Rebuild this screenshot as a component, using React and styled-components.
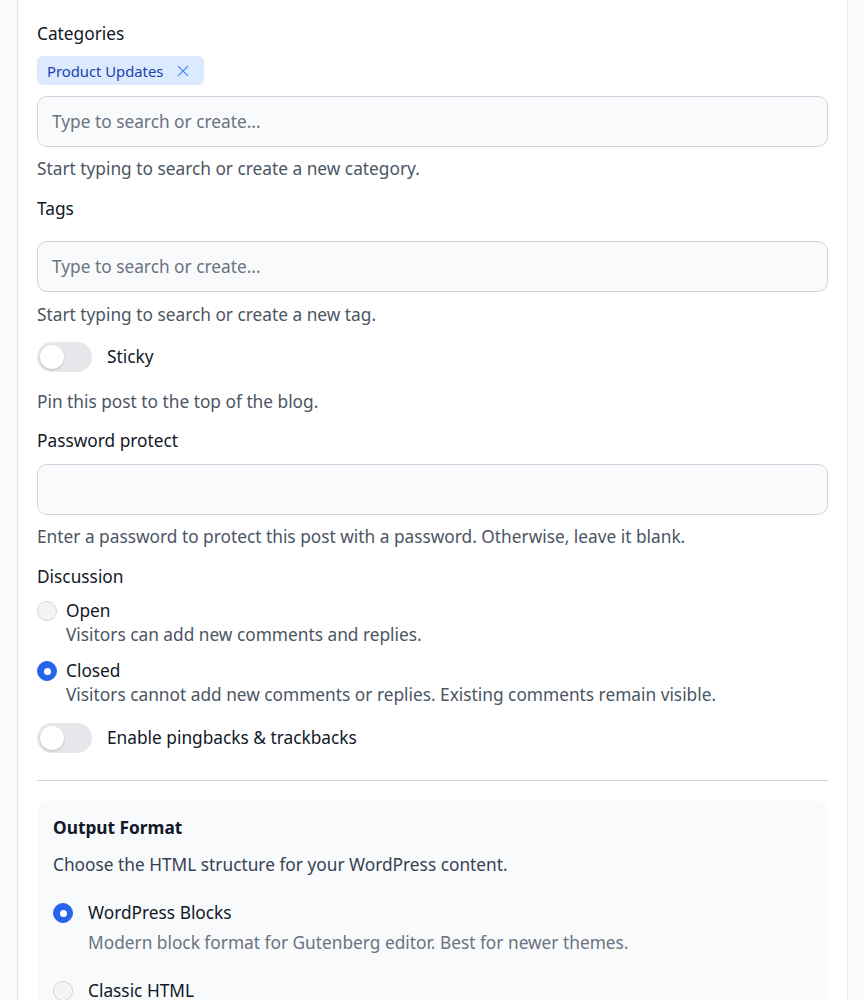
import React from "react";
import styled, { createGlobalStyle } from "styled-components";

const GlobalStyle = createGlobalStyle`
  * {
    box-sizing: border-box;
  }

  body {
    margin: 0;
    background: #f9fafb;
    font-family: "Noto Sans", "Open Sans", sans-serif;
    font-size: 17.3px;
    color: #111827;
  }
`;

const Page = styled.div`
  padding-left: 17px;
  height: 1000px;
  overflow: hidden;
`;

const Card = styled.div`
  width: 831px;
  min-height: 1100px;
  margin-top: -22px;
  padding: 0 19px;
  background: #ffffff;
  border-left: 1px solid #e5e7eb;
  border-right: 1px solid #e5e7eb;
`;

const Label = styled.div`
  font-size: 17.3px;
  line-height: 24px;
  color: #111827;
  margin-top: ${(p) => p.$top || 0}px;
  margin-bottom: ${(p) => p.$bottom || 0}px;
`;

const Hint = styled.p`
  margin: ${(p) => p.$top || 0}px 0 0;
  font-size: 17.3px;
  line-height: 24px;
  color: #4b5563;
`;

const ChipRow = styled.div`
  display: flex;
  gap: 8px;
  margin-bottom: 11px;
`;

const Chip = styled.span`
  display: inline-flex;
  align-items: center;
  gap: 12px;
  height: 29px;
  padding: 0 13px 0 10px;
  border-radius: 6px;
  background: #dbeafe;
  color: #1e40af;
  font-size: 14.8px;
  line-height: 20px;
`;

const ChipClose = styled.svg`
  width: 16px;
  height: 16px;
  stroke: #3b82f6;
  stroke-width: 1.6;
  fill: none;
  stroke-linecap: round;
`;

const Input = styled.input`
  display: block;
  width: 100%;
  height: 51px;
  padding: 0 14px;
  border: 1px solid #d1d5db;
  border-radius: 10px;
  background: #f9fafb;
  font-family: inherit;
  font-size: 17.3px;
  color: #111827;
  outline: none;

  &::placeholder {
    color: #6b7280;
  }
`;

const ToggleRow = styled.label`
  display: flex;
  align-items: center;
  gap: 15px;
  margin-top: ${(p) => p.$top || 0}px;
  font-size: 17.3px;
  line-height: 24px;
  color: #111827;
`;

const Track = styled.span`
  position: relative;
  width: 55px;
  height: 30px;
  border-radius: 15px;
  background: ${(p) => (p.$on ? "#2563eb" : "#e5e7eb")};
  flex-shrink: 0;
`;

const Knob = styled.span`
  position: absolute;
  top: 3px;
  left: ${(p) => (p.$on ? "28px" : "3px")};
  width: 24px;
  height: 24px;
  border-radius: 50%;
  background: #ffffff;
  box-shadow: 0 1px 2px rgba(0, 0, 0, 0.2);
`;

const Options = styled.div`
  display: flex;
  flex-direction: column;
  gap: ${(p) => p.$gap}px;
  margin-top: ${(p) => p.$top || 0}px;
`;

const Option = styled.label`
  display: flex;
  gap: ${(p) => p.$gap}px;
  align-items: flex-start;
`;

const Radio = styled.span`
  width: 20px;
  height: 20px;
  margin-top: 2px;
  border-radius: 50%;
  flex-shrink: 0;
  display: flex;
  align-items: center;
  justify-content: center;
  background: ${(p) => (p.$checked ? "#2563eb" : "#f3f4f6")};
  border: 1px solid ${(p) => (p.$checked ? "#2563eb" : "#d1d5db")};

  &::after {
    content: "";
    display: ${(p) => (p.$checked ? "block" : "none")};
    width: 7px;
    height: 7px;
    border-radius: 50%;
    background: #ffffff;
  }
`;

const OptionText = styled.div`
  display: flex;
  flex-direction: column;
  gap: ${(p) => p.$gap || 0}px;
`;

const OptionTitle = styled.span`
  font-size: 17.3px;
  line-height: 24px;
  color: #111827;
`;

const OptionDesc = styled.span`
  font-size: 17.3px;
  line-height: 24px;
  color: ${(p) => (p.$muted ? "#6b7280" : "#4b5563")};
`;

const Divider = styled.hr`
  margin: 27px 0 20px;
  border: 0;
  border-top: 1px solid #d1d5db;
`;

const FormatBox = styled.section`
  padding: 15px 16px 24px;
  border-radius: 10px;
  background: #f8fafc;
`;

const BoxTitle = styled.h3`
  margin: 0 0 13px;
  font-size: 17.3px;
  line-height: 24px;
  font-weight: 700;
  color: #111827;
`;

const BoxText = styled.p`
  margin: 0;
  font-size: 17.3px;
  line-height: 24px;
  color: #374151;
`;

const discussion = [
  { key: "open", title: "Open", desc: "Visitors can add new comments and replies." },
  {
    key: "closed",
    title: "Closed",
    desc: "Visitors cannot add new comments or replies. Existing comments remain visible.",
  },
];

const formats = [
  {
    key: "blocks",
    title: "WordPress Blocks",
    desc: "Modern block format for Gutenberg editor. Best for newer themes.",
  },
  {
    key: "classic",
    title: "Classic HTML",
    desc: "Plain HTML markup for the classic editor and older themes.",
  },
];

const Toggle = ({ on, label, top }) => (
  <ToggleRow $top={top}>
    <Track $on={on}>
      <Knob $on={on} />
    </Track>
    {label}
  </ToggleRow>
);

export default function App() {
  return (
    <>
      <GlobalStyle />
      <Page>
        <Card>
          <Hint>An optional excerpt to display in previews and feeds.</Hint>

          <Label $top={20} $bottom={10}>Categories</Label>
          <ChipRow>
            <Chip>
              Product Updates
              <ChipClose viewBox="0 0 24 24">
                <path d="M5 5l14 14M19 5L5 19" />
              </ChipClose>
            </Chip>
          </ChipRow>
          <Input placeholder="Type to search or create..." />
          <Hint $top={10}>Start typing to search or create a new category.</Hint>

          <Label $top={16} $bottom={20}>Tags</Label>
          <Input placeholder="Type to search or create..." />
          <Hint $top={11}>Start typing to search or create a new tag.</Hint>

          <Toggle top={15} label="Sticky" />
          <Hint $top={18}>Pin this post to the top of the blog.</Hint>

          <Label $top={15} $bottom={11}>Password protect</Label>
          <Input type="password" />
          <Hint $top={10}>
            Enter a password to protect this post with a password. Otherwise, leave it blank.
          </Hint>

          <Label $top={16}>Discussion</Label>
          <Options $gap={12} $top={10}>
            {discussion.map((o) => (
              <Option key={o.key} $gap={9}>
                <Radio $checked={o.key === "closed"} />
                <OptionText>
                  <OptionTitle>{o.title}</OptionTitle>
                  <OptionDesc>{o.desc}</OptionDesc>
                </OptionText>
              </Option>
            ))}
          </Options>

          <Toggle top={16} label="Enable pingbacks & trackbacks" />

          <Divider />

          <FormatBox>
            <BoxTitle>Output Format</BoxTitle>
            <BoxText>Choose the HTML structure for your WordPress content.</BoxText>
            <Options $gap={24} $top={24}>
              {formats.map((o) => (
                <Option key={o.key} $gap={15}>
                  <Radio $checked={o.key === "blocks"} />
                  <OptionText $gap={6}>
                    <OptionTitle>{o.title}</OptionTitle>
                    <OptionDesc $muted>{o.desc}</OptionDesc>
                  </OptionText>
                </Option>
              ))}
            </Options>
          </FormatBox>
        </Card>
      </Page>
    </>
  );
}
